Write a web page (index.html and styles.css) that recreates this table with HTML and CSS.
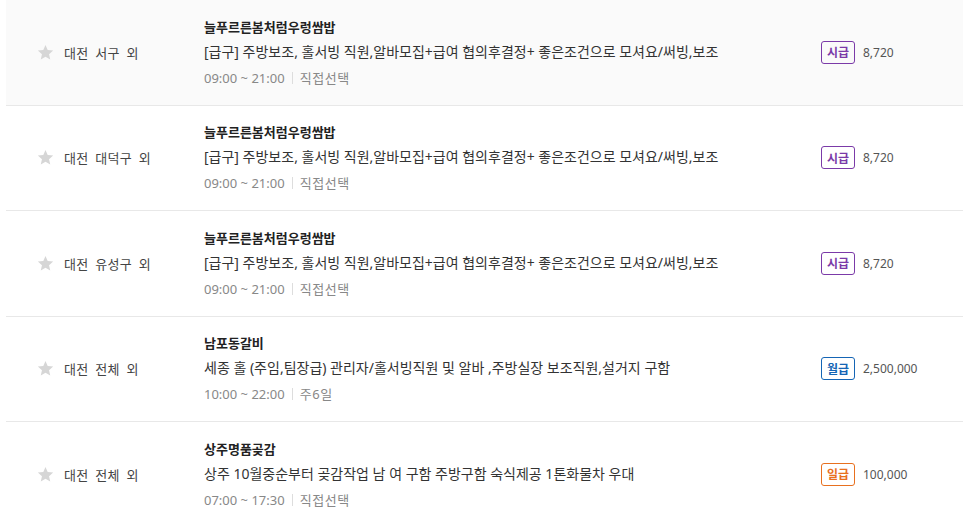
FILE: index.html
```html
<!DOCTYPE html>
<html lang="ko">
<head>
<meta charset="utf-8">
<link rel="stylesheet" href="styles.css">
</head>
<body>
<ul class="list">
  <li class="item item-hl">
    <div class="loc"><svg class="star" viewBox="0 0 24 24"><path d="M12 1.5l3.1 7.1 7.7.7-5.8 5.1 1.7 7.6L12 18l-6.7 4 1.7-7.6-5.8-5.1 7.7-.7z"/></svg><span>대전 서구 외</span></div>
    <div class="info">
      <div class="title">늘푸르른봄처럼우렁쌈밥</div>
      <div class="desc">[급구] 주방보조, 홀서빙 직원,알바모집+급여 협의후결정+ 좋은조건으로 모셔요/써빙,보조</div>
      <div class="meta"><span>09:00 ~ 21:00</span><i class="sep"></i><span class="ko">직접선택</span></div>
    </div>
    <div class="pay"><span class="badge b-hour">시급</span><span class="amt">8,720</span></div>
  </li>
  <li class="item">
    <div class="loc"><svg class="star" viewBox="0 0 24 24"><path d="M12 1.5l3.1 7.1 7.7.7-5.8 5.1 1.7 7.6L12 18l-6.7 4 1.7-7.6-5.8-5.1 7.7-.7z"/></svg><span>대전 대덕구 외</span></div>
    <div class="info">
      <div class="title">늘푸르른봄처럼우렁쌈밥</div>
      <div class="desc">[급구] 주방보조, 홀서빙 직원,알바모집+급여 협의후결정+ 좋은조건으로 모셔요/써빙,보조</div>
      <div class="meta"><span>09:00 ~ 21:00</span><i class="sep"></i><span class="ko">직접선택</span></div>
    </div>
    <div class="pay"><span class="badge b-hour">시급</span><span class="amt">8,720</span></div>
  </li>
  <li class="item">
    <div class="loc"><svg class="star" viewBox="0 0 24 24"><path d="M12 1.5l3.1 7.1 7.7.7-5.8 5.1 1.7 7.6L12 18l-6.7 4 1.7-7.6-5.8-5.1 7.7-.7z"/></svg><span>대전 유성구 외</span></div>
    <div class="info">
      <div class="title">늘푸르른봄처럼우렁쌈밥</div>
      <div class="desc">[급구] 주방보조, 홀서빙 직원,알바모집+급여 협의후결정+ 좋은조건으로 모셔요/써빙,보조</div>
      <div class="meta"><span>09:00 ~ 21:00</span><i class="sep"></i><span class="ko">직접선택</span></div>
    </div>
    <div class="pay"><span class="badge b-hour">시급</span><span class="amt">8,720</span></div>
  </li>
  <li class="item">
    <div class="loc"><svg class="star" viewBox="0 0 24 24"><path d="M12 1.5l3.1 7.1 7.7.7-5.8 5.1 1.7 7.6L12 18l-6.7 4 1.7-7.6-5.8-5.1 7.7-.7z"/></svg><span>대전 전체 외</span></div>
    <div class="info">
      <div class="title">남포동갈비</div>
      <div class="desc">세종 홀 (주임,팀장급) 관리자/홀서빙직원 및 알바 ,주방실장 보조직원,설거지 구함</div>
      <div class="meta"><span>10:00 ~ 22:00</span><i class="sep"></i><span class="ko">주6일</span></div>
    </div>
    <div class="pay"><span class="badge b-month">월급</span><span class="amt">2,500,000</span></div>
  </li>
  <li class="item">
    <div class="loc"><svg class="star" viewBox="0 0 24 24"><path d="M12 1.5l3.1 7.1 7.7.7-5.8 5.1 1.7 7.6L12 18l-6.7 4 1.7-7.6-5.8-5.1 7.7-.7z"/></svg><span>대전 전체 외</span></div>
    <div class="info">
      <div class="title">상주명품곶감</div>
      <div class="desc">상주 10월중순부터 곶감작업 남 여 구함 주방구함 숙식제공 1톤화물차 우대</div>
      <div class="meta"><span>07:00 ~ 17:30</span><i class="sep"></i><span class="ko">직접선택</span></div>
    </div>
    <div class="pay"><span class="badge b-day">일급</span><span class="amt">100,000</span></div>
  </li>
</ul>
</body>
</html>
```

FILE: styles.css
```css
html, body {
  margin: 0;
  padding: 0;
  background: #fff;
}
body {
  font-family: "Noto Sans", "Noto Sans CJK KR", sans-serif;
  color: #333;
  overflow: hidden;
}
.list {
  list-style: none;
  margin: 0 0 0 6px;
  padding: 0;
}
.item {
  display: flex;
  align-items: center;
  height: 104.5px;
  border-bottom: 1px solid #e8e8e8;
}
.item-hl {
  background: #fafafa;
}
.loc {
  width: 198px;
  flex: none;
  display: flex;
  align-items: center;
  padding-left: 31px;
  box-sizing: border-box;
  font-size: 13px;
  letter-spacing: 0.3px;
  word-spacing: 3px;
  color: #444;
}
.star {
  width: 17px;
  height: 17px;
  fill: #d6d6d6;
  margin-right: 10px;
}
.info {
  flex: 1;
  min-width: 0;
}
.title {
  font-size: 13px;
  font-weight: 700;
  line-height: 20px;
  color: #222;
}
.desc {
  margin-top: 5px;
  font-size: 14px;
  line-height: 20px;
  color: #333;
  white-space: nowrap;
}
.meta {
  margin-top: 6px;
  font-size: 13px;
  line-height: 20px;
  color: #888;
  display: flex;
  align-items: center;
}
.ko {
  letter-spacing: 0.6px;
}
.sep {
  display: inline-block;
  width: 1px;
  height: 12px;
  background: #ddd;
  margin: 0 7px;
}
.pay {
  width: 142px;
  flex: none;
  display: flex;
  align-items: center;
  font-size: 12px;
}
.badge {
  box-sizing: border-box;
  width: 34px;
  height: 23px;
  border: 1px solid;
  border-radius: 3px;
  display: flex;
  align-items: center;
  justify-content: center;
  font-weight: 700;
  font-size: 12px;
}
.b-hour { color: #7b3aa8; border-color: #7b3aa8; }
.b-month { color: #1565b5; border-color: #1565b5; }
.b-day { color: #e8701f; border-color: #e8701f; }
.amt {
  margin-left: 8px;
  color: #555;
}
```
